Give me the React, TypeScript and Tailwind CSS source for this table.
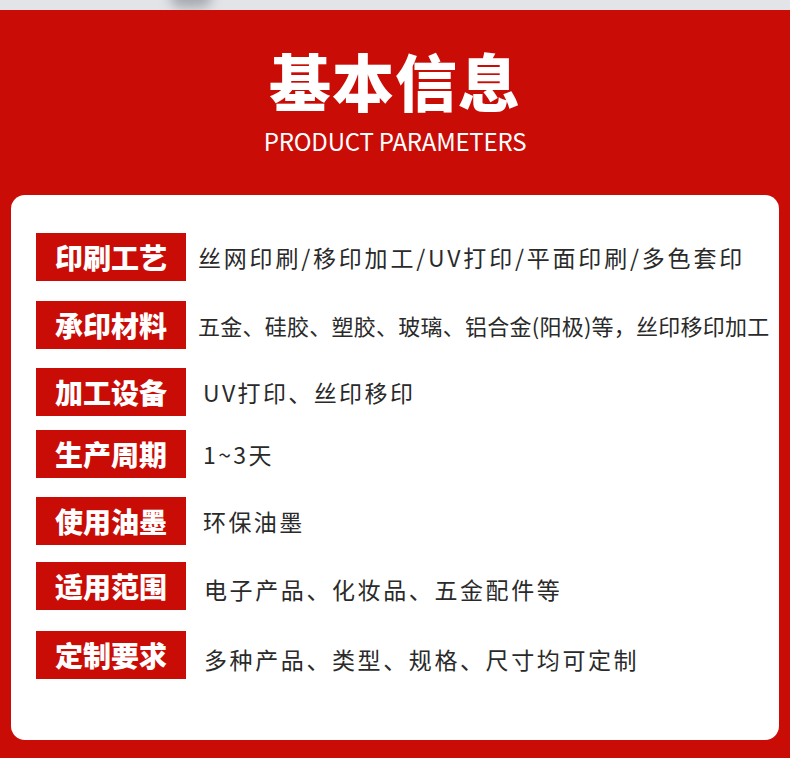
const ROWS = [
  { label: "印刷工艺", value: "丝网印刷/移印加工/UV打印/平面印刷/多色套印", mt: "mt-[38px]", text: "pl-[12px] text-[23px] tracking-[2.8px]" },
  { label: "承印材料", value: "五金、硅胶、塑胶、玻璃、铝合金(阳极)等，丝印移印加工", mt: "mt-[20px]", text: "pl-[12px] text-[22px] tracking-[0.25px]" },
  { label: "加工设备", value: "UV打印、丝印移印", mt: "mt-[19px]", text: "pl-[17px] text-[23px] tracking-[2.4px]" },
  { label: "生产周期", value: "1~3天", mt: "mt-[14px]", text: "pl-[17px] text-[23px] tracking-[2.4px]" },
  { label: "使用油墨", value: "环保油墨", mt: "mt-[19px]", text: "pl-[17px] text-[23px] tracking-[2.4px]" },
  { label: "适用范围", value: "电子产品、化妆品、五金配件等", mt: "mt-[17px]", text: "pl-[18px] pt-[6px] text-[23px] tracking-[2.6px]" },
  { label: "定制要求", value: "多种产品、类型、规格、尺寸均可定制", mt: "mt-[21px]", text: "pl-[18px] pt-[8px] text-[23px] tracking-[2.6px]" },
];

const CJK = "font-['Noto_Sans_CJK_SC','Noto_Sans',sans-serif]";

export default function App() {
  return (
    <div className={`w-[790px] h-[780px] bg-white overflow-hidden ${CJK}`}>
      {/* top strip */}
      <div className="relative h-[10px] bg-[#e2e4e8] overflow-hidden">
        <div className="absolute left-[170px] top-[-14px] h-[22px] w-[42px] rounded-full bg-[#8e929a] blur-[6px] opacity-70" />
      </div>

      {/* red panel */}
      <div className="h-[748px] bg-[#c90c06] px-[11px] pt-[34px]">
        <h1 className="text-center text-[62px] leading-[72px] font-black text-white tracking-[1px]">
          基本信息
        </h1>
        <p className="mt-[10px] text-center text-[24px] leading-[30px] font-normal text-white tracking-[-0.2px]">
          PRODUCT PARAMETERS
        </p>

        <div className="mt-[39px] h-[545px] rounded-[14px] bg-white pl-[25px] flex flex-col">
          {ROWS.map((r) => (
            <div key={r.label} className={`flex items-center ${r.mt}`}>
              <div className="flex h-[48px] w-[150px] shrink-0 items-center justify-center bg-[#c90c06] text-[28px] font-black text-white">
                {r.label}
              </div>
              <div className={`whitespace-nowrap text-[#2a2a2a] leading-[30px] ${r.text}`}>
                {r.value}
              </div>
            </div>
          ))}
        </div>
      </div>
    </div>
  );
}
